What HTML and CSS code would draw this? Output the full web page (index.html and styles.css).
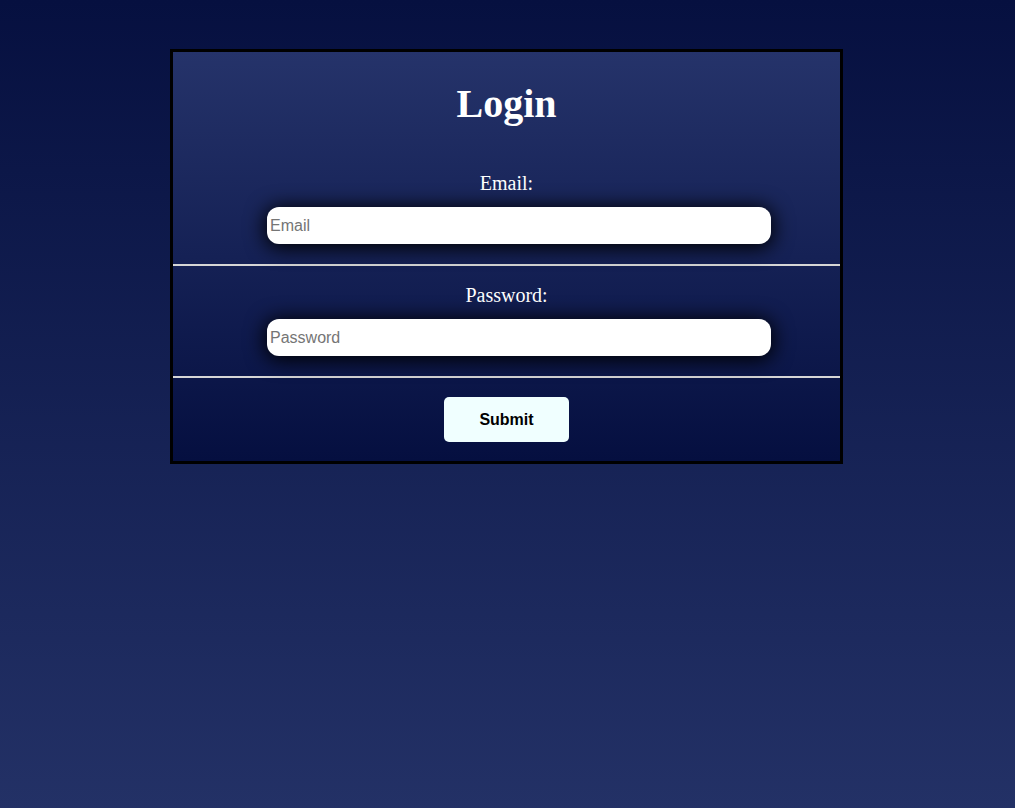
FILE: index.html
```html
<!DOCTYPE html>
<html>
<head>
<meta charset="utf-8">
<title>Login</title>
<link rel="stylesheet" href="styles.css">
</head>
<body>
<div class="card">
  <h1 class="title">Login</h1>
  <div class="group group-first">
    <label class="label" for="email">Email:</label>
    <input class="field" id="email" type="email" placeholder="Email">
  </div>
  <div class="group">
    <label class="label" for="password">Password:</label>
    <input class="field" id="password" type="password" placeholder="Password">
  </div>
  <div class="actions">
    <button class="submit" type="submit">Submit</button>
  </div>
</div>
</body>
</html>
```

FILE: styles.css
```css
html {
  height: 100%;
}
body {
  margin: 0;
  min-height: 100%;
  background: linear-gradient(to bottom, #061040 0%, #233166 100%);
  font-family: "Liberation Serif", "Times New Roman", serif;
  padding-top: 49px;
  box-sizing: border-box;
}
.card {
  width: 667px;
  margin-left: 170px;
  border: 3px solid #000;
  background: linear-gradient(to bottom, #25336a 0%, #050f40 100%);
  display: flex;
  flex-direction: column;
}
.title {
  margin: 29px 0 45px;
  text-align: center;
  color: #fff;
  font-size: 40px;
  font-weight: bold;
  line-height: 46px;
}
.group {
  display: flex;
  flex-direction: column;
  align-items: center;
  padding: 18px 0 20px;
  border-bottom: 2px solid #d6d6d6;
}
.group-first {
  padding-top: 0;
}
.label {
  color: #fff;
  font-size: 20px;
  line-height: 23px;
  margin-bottom: 12px;
}
.field {
  width: 504px;
  height: 37px;
  margin-left: 25px;
  box-sizing: border-box;
  border: none;
  border-radius: 12px;
  background: #fff;
  padding: 0 3px;
  font-family: "Liberation Sans", Arial, sans-serif;
  font-size: 16px;
  color: #000;
  box-shadow: 0 2px 20px 2px #000;
  outline: none;
}
.field::placeholder {
  color: #757575;
}
.actions {
  display: flex;
  justify-content: center;
  padding: 19px 0 19px;
}
.submit {
  width: 125px;
  height: 45px;
  border: none;
  border-radius: 5px;
  background: #f0ffff;
  color: #000;
  font-family: "Liberation Sans", Arial, sans-serif;
  font-size: 16px;
  font-weight: bold;
  cursor: pointer;
}
```
